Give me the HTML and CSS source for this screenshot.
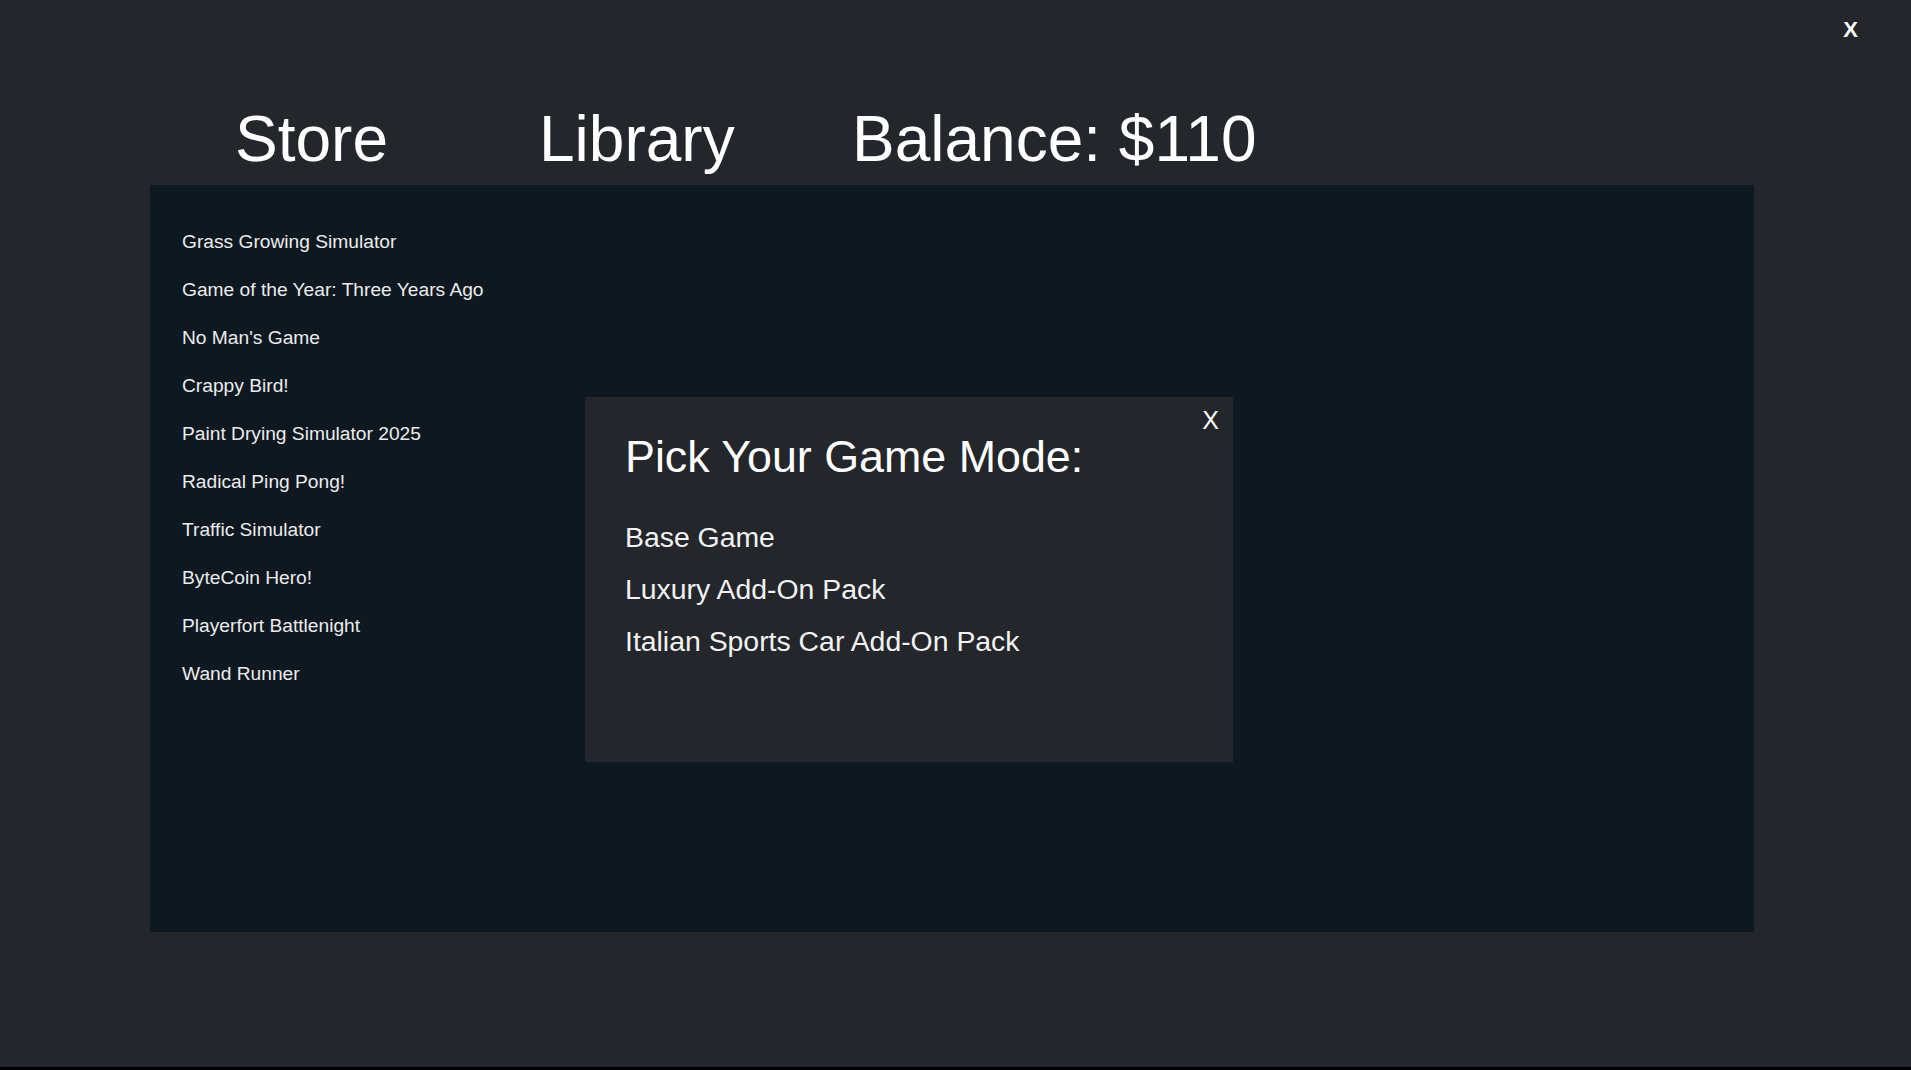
FILE: index.html
```html
<!DOCTYPE html>
<html lang="en">
<head>
  <meta charset="UTF-8" />
  <title>Game Store</title>
  <link rel="stylesheet" href="styles.css">
</head>
<body>
  <div class="app">
    <div class="topbar">
      <button class="quit">X</button>
    </div>

    <nav class="tabs">
      <a href="#" class="tab">Store</a>
      <a href="#" class="tab">Library</a>
      <span class="tab balance">Balance: $110</span>
    </nav>

    <div class="panel">
      <ul class="game-list">
        <li>Grass Growing Simulator</li>
        <li>Game of the Year: Three Years Ago</li>
        <li>No Man's Game</li>
        <li>Crappy Bird!</li>
        <li>Paint Drying Simulator 2025</li>
        <li>Radical Ping Pong!</li>
        <li>Traffic Simulator</li>
        <li>ByteCoin Hero!</li>
        <li>Playerfort Battlenight</li>
        <li>Wand Runner</li>
      </ul>

      <div class="mode-popup">
        <button class="popup-close">X</button>
        <h2>Pick Your Game Mode:</h2>
        <ul class="modes">
          <li>Base Game</li>
          <li>Luxury Add-On Pack</li>
          <li>Italian Sports Car Add-On Pack</li>
        </ul>
      </div>
    </div>
  </div>
</body>
</html>
```

FILE: styles.css
```css
* {
  margin: 0;
  padding: 0;
  box-sizing: border-box;
}

html, body {
  height: 1070px;
  overflow: hidden;
}

body {
  background: #000;
  font-family: 'Liberation Sans', Arial, sans-serif;
  color: #fff;
}

.app {
  height: 1067px;
  background: #23262b;
}

button {
  background: none;
  border: none;
  color: #fff;
  font-family: inherit;
  cursor: pointer;
}

.topbar {
  height: 102px;
  display: flex;
  justify-content: flex-end;
  align-items: flex-start;
  padding: 17px 53px 0 0;
}

.quit {
  font-size: 22px;
  font-weight: bold;
  line-height: normal;
}

.tabs {
  height: 83px;
  display: grid;
  grid-template-columns: 304px 313px auto;
  padding-left: 235px;
}

.tab {
  color: #fff;
  text-decoration: none;
  font-size: 64px;
  line-height: normal;
}

.panel {
  position: relative;
  margin-left: 150px;
  width: 1604px;
  height: 747px;
  background: #0e1820;
  padding: 33px 32px;
}

.game-list {
  list-style: none;
}

.game-list li {
  height: 48px;
  line-height: 48px;
  font-size: 19.2px;
  color: #ececec;
}

.mode-popup {
  position: absolute;
  left: 435px;
  top: 212px;
  width: 648px;
  height: 365px;
  background: #23262b;
  padding: 34px 40px;
}

.popup-close {
  position: absolute;
  top: 9px;
  right: 14px;
  font-size: 25px;
  line-height: normal;
}

.mode-popup h2 {
  font-size: 44.8px;
  font-weight: normal;
  line-height: normal;
  margin-bottom: 29px;
}

.modes {
  list-style: none;
}

.modes li {
  font-size: 28.4px;
  line-height: 52px;
  color: #f2f2f2;
}
```
